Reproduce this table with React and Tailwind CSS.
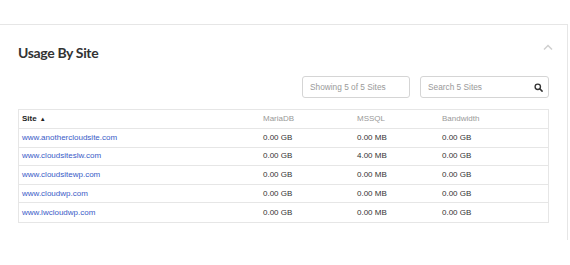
export default function App() {
  const sites = [
    { site: "www.anothercloudsite.com", maria: "0.00 GB", mssql: "0.00 MB", bw: "0.00 GB" },
    { site: "www.cloudsiteslw.com", maria: "0.00 GB", mssql: "4.00 MB", bw: "0.00 GB" },
    { site: "www.cloudsitewp.com", maria: "0.00 GB", mssql: "0.00 MB", bw: "0.00 GB" },
    { site: "www.cloudwp.com", maria: "0.00 GB", mssql: "0.00 MB", bw: "0.00 GB" },
    { site: "www.lwcloudwp.com", maria: "0.00 GB", mssql: "0.00 MB", bw: "0.00 GB" },
  ];

  return (
    <div
      className="w-[570px] h-[265px] bg-white pt-[24px] overflow-hidden"
      style={{ fontFamily: '"Liberation Sans", Arial, sans-serif' }}
    >
      <div className="mr-[2px] h-[216px] border-t border-r border-[#e6e6e6] pl-[18px] pr-[18px]">
        <div className="flex items-start justify-between h-[51px]">
          <h2
            className="mt-[17px] text-[14px] font-bold text-[#333] tracking-[-0.35px]"
            style={{ fontFamily: 'Lato, "Open Sans", sans-serif' }}
          >
            Usage By Site
          </h2>
          <svg
            className="mt-[19px] mr-[-4px]"
            width="10"
            height="7"
            viewBox="0 0 10 7"
            fill="none"
          >
            <path d="M1 5.5 L5 1.5 L9 5.5" stroke="#cfcfcf" strokeWidth="1.5" />
          </svg>
        </div>

        <div className="flex justify-end gap-[10px]">
          <div className="w-[108px] h-[22px] border border-[#d5d5d5] rounded-[3px] flex items-center pl-[7px] text-[8.3px] text-[#999]">
            Showing 5 of 5 Sites
          </div>
          <div className="w-[129px] h-[22px] border border-[#d5d5d5] rounded-[3px] flex items-center justify-between pl-[7px] pr-[5px] text-[8.3px] text-[#999]">
            <span>Search 5 Sites</span>
            <svg width="9" height="9" viewBox="0 0 10 10" fill="none">
              <circle cx="4.2" cy="4.2" r="3" stroke="#333" strokeWidth="1.5" />
              <path d="M6.4 6.4 L9 9" stroke="#333" strokeWidth="1.7" strokeLinecap="round" />
            </svg>
          </div>
        </div>

        <div className="mt-[11px] border border-[#e6e6e6] text-[8px]">
          <div className="grid grid-cols-[244px_94px_85px_1fr] h-[19px] items-center border-b border-[#e6e6e6]">
            <div className="pl-[3px] font-bold text-[#222] flex items-center gap-[3px]">
              Site
              <span className="text-[6px] leading-none">&#9650;</span>
            </div>
            <div className="text-[#999]">MariaDB</div>
            <div className="text-[#999]">MSSQL</div>
            <div className="text-[#999]">Bandwidth</div>
          </div>
          {sites.map((s, i) => (
            <div
              key={s.site}
              className={
                "grid grid-cols-[244px_94px_85px_1fr] h-[18.6px] items-center" +
                (i < sites.length - 1 ? " border-b border-[#e6e6e6]" : "")
              }
            >
              <div className="pl-[3px] text-[#3a5bc7]">{s.site}</div>
              <div className="text-[#333]">{s.maria}</div>
              <div className="text-[#333]">{s.mssql}</div>
              <div className="text-[#333]">{s.bw}</div>
            </div>
          ))}
        </div>
      </div>
    </div>
  );
}
